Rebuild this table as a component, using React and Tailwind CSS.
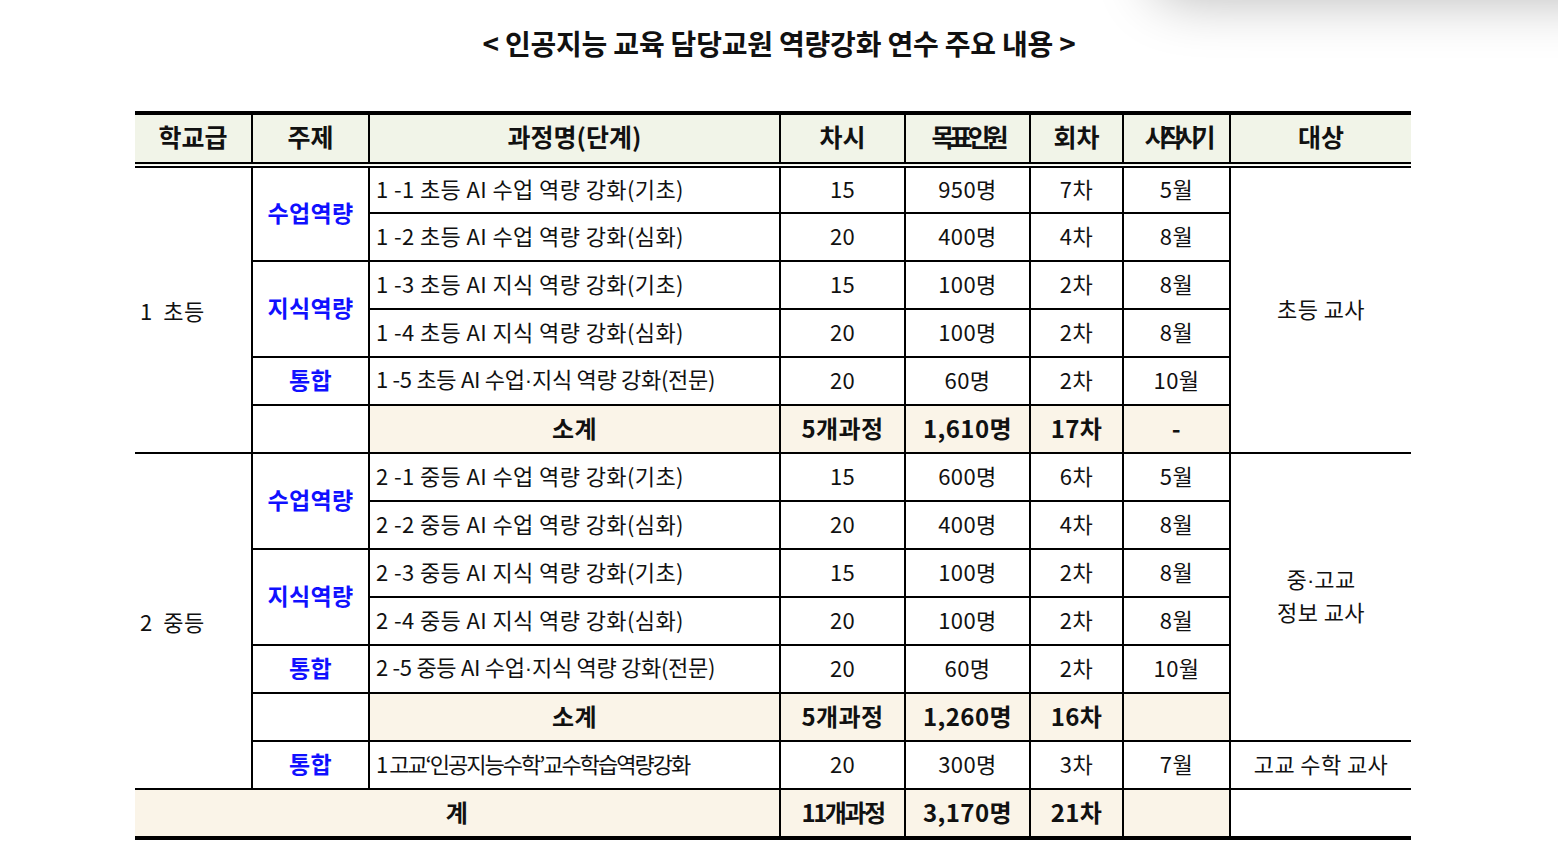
import React from 'react';

const elementary = [
  { topic: '수업역량', span: 2, name: '1 -1 초등 AI 수업 역량 강화(기초)', hours: '15', people: '950명', rounds: '7차', month: '5월' },
  { name: '1 -2 초등 AI 수업 역량 강화(심화)', hours: '20', people: '400명', rounds: '4차', month: '8월' },
  { topic: '지식역량', span: 2, name: '1 -3 초등 AI 지식 역량 강화(기초)', hours: '15', people: '100명', rounds: '2차', month: '8월' },
  { name: '1 -4 초등 AI 지식 역량 강화(심화)', hours: '20', people: '100명', rounds: '2차', month: '8월' },
  { topic: '통합', span: 1, name: '1 -5 초등 AI 수업·지식 역량 강화(전문)', hours: '20', people: '60명', rounds: '2차', month: '10월' },
];

const middle = [
  { topic: '수업역량', span: 2, name: '2 -1 중등 AI 수업 역량 강화(기초)', hours: '15', people: '600명', rounds: '6차', month: '5월' },
  { name: '2 -2 중등 AI 수업 역량 강화(심화)', hours: '20', people: '400명', rounds: '4차', month: '8월' },
  { topic: '지식역량', span: 2, name: '2 -3 중등 AI 지식 역량 강화(기초)', hours: '15', people: '100명', rounds: '2차', month: '8월' },
  { name: '2 -4 중등 AI 지식 역량 강화(심화)', hours: '20', people: '100명', rounds: '2차', month: '8월' },
  { topic: '통합', span: 1, name: '2 -5 중등 AI 수업·지식 역량 강화(전문)', hours: '20', people: '60명', rounds: '2차', month: '10월' },
];

const td = 'border-2 border-black text-center align-middle pb-[4px]';
const sub = 'border-2 border-black text-center align-middle pb-[3px] bg-[#faf4e8] font-bold text-[24px]';
const th = 'border-2 border-t-4 border-b-[6px] [border-bottom-style:double] border-black pb-[3px]';

// the CJK middle dot is full width; draw it from a latin face so "수업·지식" stays tight
const dotted = (s) =>
  s.split('·').flatMap((part, i) =>
    i === 0 ? [part] : [<span key={i} className="font-['Liberation_Sans',sans-serif] tracking-normal">·</span>, part]
  );

function CourseRows({ list, level, levelSpan, target, targetSpan }) {
  return list.map((r, i) => (
    <tr key={r.name} className="h-[48px]">
      {i === 0 && (
        <td rowSpan={levelSpan} className="border-2 border-l-0 border-black align-middle pl-[5px] text-left whitespace-pre">{level}</td>
      )}
      {r.topic && (
        <td rowSpan={r.span} className={`${td} font-bold text-[23px] text-[#1010ff]`}>{r.topic}</td>
      )}
      <td className={`border-2 border-black align-middle text-left pl-[6px] pb-[4px] whitespace-nowrap ${r.name.includes('·') ? 'tracking-[-0.3px]' : ''}`}>
        {dotted(r.name)}
      </td>
      <td className={td}>{r.hours}</td>
      <td className={td}>{r.people}</td>
      <td className={td}>{r.rounds}</td>
      <td className={td}>{r.month}</td>
      {i === 0 && (
        <td rowSpan={targetSpan} className="border-2 border-r-0 border-black text-center align-middle leading-[31px] pb-[4px]">{target}</td>
      )}
    </tr>
  ));
}

export default function App() {
  return (
    <div className="relative min-h-[862px] bg-white overflow-hidden text-[#111] font-['Noto_Sans_CJK_KR','Noto_Sans',sans-serif]">
      <div className="absolute -top-[70px] left-[1150px] w-[560px] h-[70px] rounded-[40px] bg-white shadow-[0_0_55px_rgba(0,0,0,0.28)]" />

      <h1 className="pt-[23px] text-center text-[28px] font-bold tracking-[-0.2px] leading-[40px]">
        &lt; 인공지능 교육 담당교원 역량강화 연수 주요 내용 &gt;
      </h1>

      <table className="ml-[135px] mt-[48px] w-[1276px] table-fixed border-collapse text-[22px] tracking-[0.4px]">
        <colgroup>
          <col className="w-[117px]" />
          <col className="w-[117px]" />
          <col className="w-[411px]" />
          <col className="w-[125px]" />
          <col className="w-[125px]" />
          <col className="w-[93px]" />
          <col className="w-[107px]" />
          <col className="w-[181px]" />
        </colgroup>
        <thead>
          <tr className="h-[52px] bg-[#f1f4e8] font-bold text-[25px] tracking-normal">
            <th className={`${th} border-l-0`}>학교급</th>
            <th className={th}>주제</th>
            <th className={th}>과정명(단계)</th>
            <th className={th}>차시</th>
            <th className={`${th} tracking-[-5px]`}>목표인원</th>
            <th className={th}>회차</th>
            <th className={`${th} tracking-[-7px]`}>시작시기</th>
            <th className={`${th} border-r-0`}>대상</th>
          </tr>
        </thead>
        <tbody>
          <CourseRows list={elementary} level="1  초등" levelSpan={6} target="초등 교사" targetSpan={6} />
          <tr className="h-[48px]">
            <td className="border-2 border-black" />
            <td className={sub}>소계</td>
            <td className={sub}>5개과정</td>
            <td className={sub}>1,610명</td>
            <td className={sub}>17차</td>
            <td className={sub}>-</td>
          </tr>

          <CourseRows
            list={middle}
            level="2  중등"
            levelSpan={7}
            target={<>{dotted('중·고교')}<br />정보 교사</>}
            targetSpan={6}
          />
          <tr className="h-[48px]">
            <td className="border-2 border-black" />
            <td className={sub}>소계</td>
            <td className={sub}>5개과정</td>
            <td className={sub}>1,260명</td>
            <td className={sub}>16차</td>
            <td className={sub} />
          </tr>
          <tr className="h-[48px]">
            <td className={`${td} font-bold text-[23px] text-[#1010ff]`}>통합</td>
            <td className="border-2 border-black align-middle text-left pl-[6px] pb-[4px] whitespace-pre tracking-[-2px]">1 고교‘인공지능수학’교수학습역량강화</td>
            <td className={td}>20</td>
            <td className={td}>300명</td>
            <td className={td}>3차</td>
            <td className={td}>7월</td>
            <td className="border-2 border-r-0 border-black text-center align-middle pb-[4px]">고교 수학 교사</td>
          </tr>

          <tr className="h-[49px]">
            <td colSpan={3} className="border-2 border-l-0 border-b-4 border-black bg-[#faf4e8] text-center font-bold text-[24px] pb-[3px]">계</td>
            <td className="border-2 border-b-4 border-black bg-[#faf4e8] text-center font-bold text-[24px] tracking-[-2.5px] pb-[3px]">11개과정</td>
            <td className="border-2 border-b-4 border-black bg-[#faf4e8] text-center font-bold text-[24px] pb-[3px]">3,170명</td>
            <td className="border-2 border-b-4 border-black bg-[#faf4e8] text-center font-bold text-[24px] pb-[3px]">21차</td>
            <td className="border-2 border-b-4 border-black bg-[#faf4e8]" />
            <td className="border-2 border-r-0 border-b-4 border-black bg-white" />
          </tr>
        </tbody>
      </table>
    </div>
  );
}
